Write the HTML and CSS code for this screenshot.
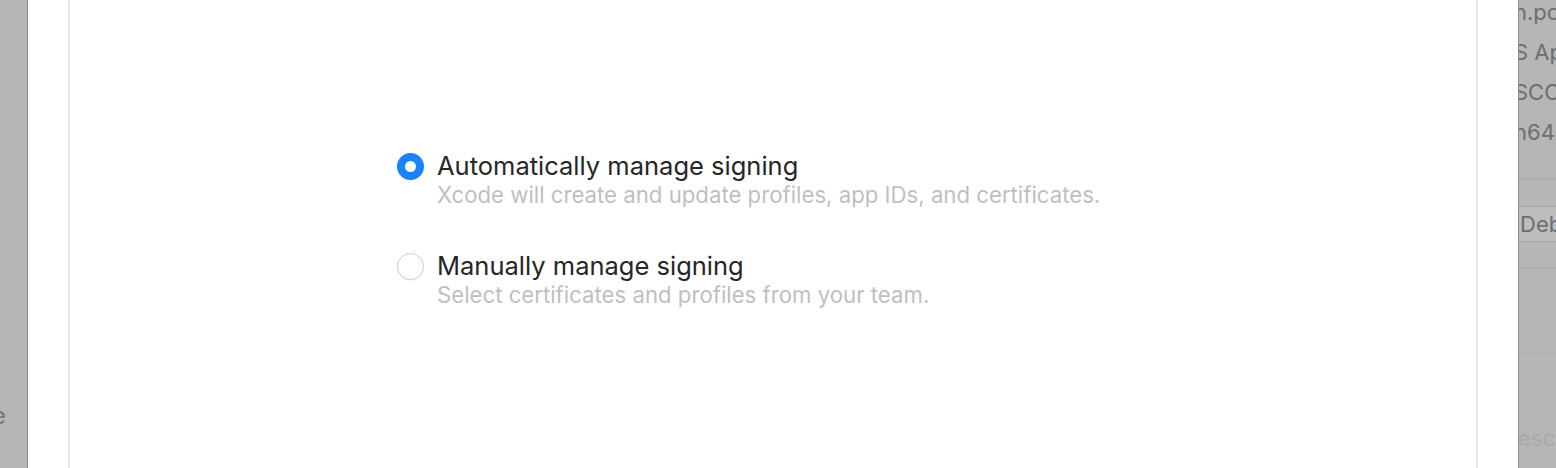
FILE: index.html
```html
<!DOCTYPE html>
<html lang="en">
<head>
<meta charset="UTF-8" />
<meta name="viewport" content="width=device-width, initial-scale=1.0" />
<title>Signing</title>
<link rel="stylesheet" href="styles.css">
</head>
<body>

<div class="desk">
  <aside class="backdrop backdrop-left">
    <span class="peek">e</span>
  </aside>

  <main class="sheet">
    <div class="pane">
      <div class="options">
        <label class="option">
          <span class="radio checked"></span>
          <span class="option-title">Automatically manage signing</span>
          <span class="option-desc">Xcode will create and update profiles, app IDs, and certificates.</span>
        </label>
        <label class="option">
          <span class="radio"></span>
          <span class="option-title">Manually manage signing</span>
          <span class="option-desc">Select certificates and profiles from your team.</span>
        </label>
      </div>
    </div>
  </main>

  <aside class="backdrop backdrop-right">
    <div class="row">n.pch</div>
    <div class="row">S App</div>
    <div class="row">SCO</div>
    <div class="row">n64</div>
    <div class="row row-gap"></div>
    <div class="row row-button">Debug</div>
    <div class="row row-line"></div>
    <div class="row row-tall"></div>
    <div class="row row-faint">esc</div>
  </aside>
</div>

</body>
</html>
```

FILE: styles.css
```css
body {
  margin: 0;
  font-family: 'Inter', 'Helvetica Neue', sans-serif;
  overflow: hidden;
}

.desk {
  display: flex;
  height: 468px;
}

.backdrop {
  background: #b6b6b6;
  color: #6e6e6e;
  font-size: 22px;
  overflow: hidden;
}

.backdrop-left {
  width: 27px;
  border-right: 1px solid #8e8e8e;
  display: flex;
  flex-direction: column;
  justify-content: flex-end;
}

.peek {
  font-size: 24px;
  margin: 0 0 38px -8px;
  color: #777;
}

.backdrop-right {
  width: 37px;
  border-left: 1px solid #8e8e8e;
  white-space: nowrap;
}

.row {
  height: 40px;
  line-height: 24px;
  text-indent: -5px;
}

.row-gap {
  height: 18px;
  border-bottom: 1px solid #a9a9a9;
}

.row-button {
  margin-top: 27px;
  height: 34px;
  line-height: 34px;
  background: #bdbdbd;
  border-top: 1px solid #a6a6a6;
  border-bottom: 1px solid #aaaaaa;
  text-indent: 1px;
}

.row-line {
  height: 25px;
  border-bottom: 1px solid #a9a9a9;
}

.row-tall {
  height: 85px;
  border-bottom: 1px solid #aeaeae;
}

.row-faint {
  margin-top: 72px;
  color: #a9a9a9;
  text-indent: -1px;
}

.sheet {
  flex: 1;
  background: #fff;
  padding: 0 40px 0 40px;
}

.pane {
  height: 100%;
  border-left: 2px solid #e6e6e6;
  border-right: 2px solid #e6e6e6;
}

.options {
  padding: 152px 0 0 327px;
  display: flex;
  flex-direction: column;
  gap: 42px;
}

.option {
  display: grid;
  grid-template-columns: 27px auto;
  column-gap: 13px;
  align-items: center;
}

.radio {
  width: 27px;
  height: 27px;
  box-sizing: border-box;
  border-radius: 50%;
  background: #fff;
  border: 1px solid #cfcfcf;
  box-shadow: 0 0.5px 1px rgba(0,0,0,0.08);
}

.radio.checked {
  border: 8.5px solid #1a82fb;
  background: #fff;
}

.option-title {
  font-size: 25.5px;
  line-height: 28px;
  color: #262626;
}

.option-desc {
  grid-column: 2;
  font-size: 22.2px;
  line-height: 30px;
  color: #bfbfbf;
}
```
